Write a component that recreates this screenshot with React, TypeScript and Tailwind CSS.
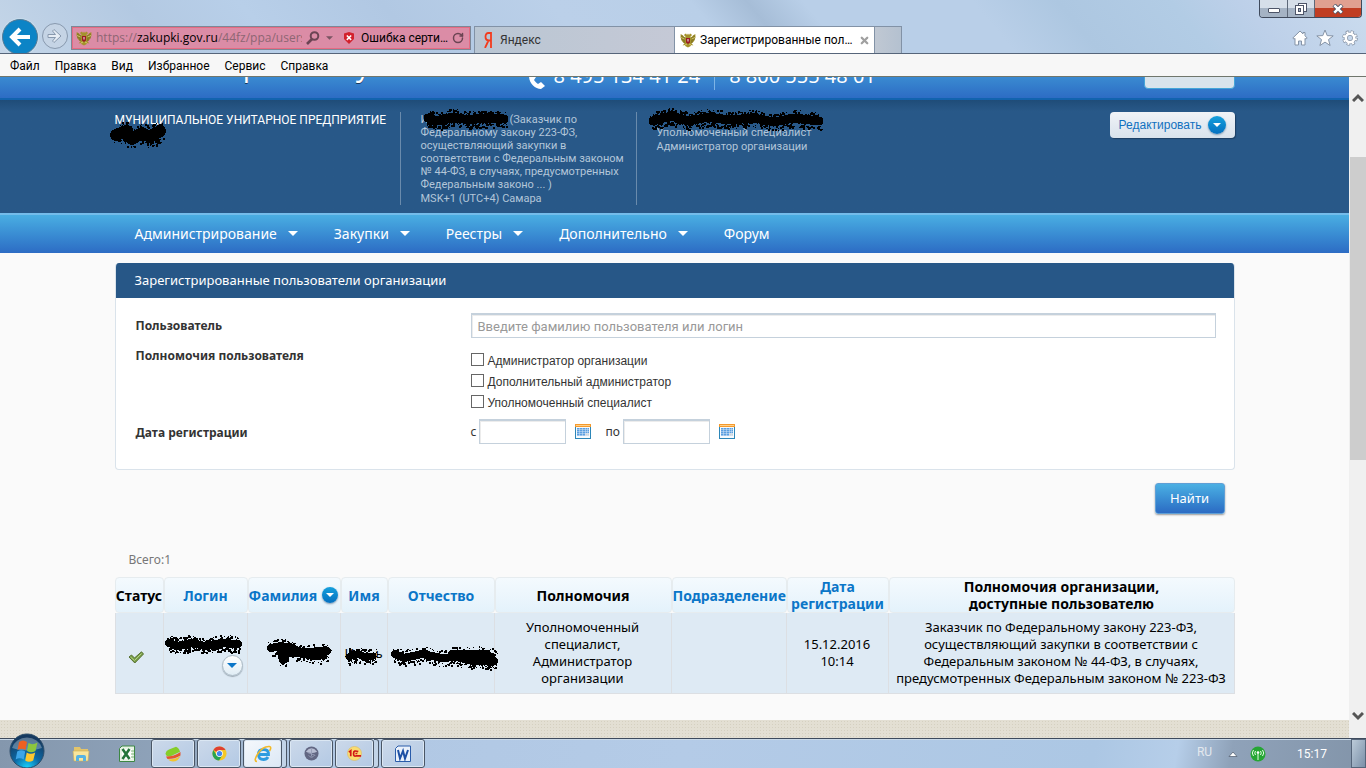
import { useState } from 'react'
import { RotateCw, X } from 'lucide-react'

type Point = [number, number]

const menuItems = ['Файл', 'Правка', 'Вид', 'Избранное', 'Сервис', 'Справка']

const navItems = [
  { title: 'Администрирование', sub: true },
  { title: 'Закупки', sub: true },
  { title: 'Реестры', sub: true },
  { title: 'Дополнительно', sub: true },
  { title: 'Форум', sub: false },
]

const roles = ['Администратор организации', 'Дополнительный администратор', 'Уполномоченный специалист']

// Hand-painted marker stroke that covers personal data
function Scribble({ width, height, points, stroke = 10, className }: {
  width: number
  height: number
  points: Point[]
  stroke?: number
  className: string
}) {
  let seed = width * 31 + height
  const random = () => {
    seed = (seed * 16807) % 2147483647
    return seed / 2147483647
  }
  const specks = Array.from({ length: width * 5 }, () => {
    const at = random() * (points.length - 1)
    const i = Math.min(Math.floor(at), points.length - 2)
    const t = at - i
    const x = points[i][0] + (points[i + 1][0] - points[i][0]) * t
    const y = points[i][1] + (points[i + 1][1] - points[i][1]) * t
    return [
      Math.round(x + (random() - 0.5) * 8),
      Math.round(y + (random() - 0.5) * (stroke + 8)),
      1 + Math.round(random()),
    ]
  })

  return (
    <svg
      width={width}
      height={height}
      className={`pointer-events-none absolute z-10 overflow-visible ${className}`}
      shapeRendering="crispEdges"
      aria-hidden="true"
    >
      <polyline
        points={points.map((p) => p.join(',')).join(' ')}
        fill="none"
        stroke="#000"
        strokeWidth={stroke}
        strokeLinecap="round"
        strokeLinejoin="round"
      />
      {specks.map(([x, y, size], i) => (
        <rect key={i} x={x} y={y} width={size} height={size} fill="#000" />
      ))}
    </svg>
  )
}

function Emblem() {
  return (
    <svg viewBox="0 0 16 16" className="size-4 shrink-0" aria-hidden="true">
      <path
        d="M8 1.500 9 3l1-1.500 1.500.7.3 1.300-1.300 1 .3 1.200L13 3.500l2.300-1.600.2 3.600-.9 2.200-1.200 2.200-1.900 1.300 1.900 2.300-2-.4-1 1.200L8 15.500l-2.400-1.200-1-1.200-2 .4 1.900-2.300-1.900-1.300L1.400 7.700.5 5.500l.2-3.600L3 3.500l2.200 2.200.3-1.200-1.300-1 .3-1.300L6 1.500 7 3z"
        fill="#a5932c"
      />
      <path d="M2 3.500v5M4 5v6M12 5v6M14 3.500v5" stroke="#5d5417" strokeWidth=".7" />
      <path d="M1 5.500 4.500 7M15 5.500 11.500 7M5 13l2-1M11 13l-2-1" stroke="#ded37c" strokeWidth=".8" />
      <path d="M6 6h4v4.500L8 12l-2-1.500z" fill="#9b1b24" />
      <path d="M7.500 7h1v2.500h-1z" fill="#eee" />
    </svg>
  )
}

function ArrowDown({ className = '' }: { className?: string }) {
  return (
    <svg viewBox="0 0 10 5" className={`h-[5px] w-[10px] ${className}`} aria-hidden="true">
      <path d="M0 0h10L5 5z" fill="currentColor" />
    </svg>
  )
}

function RoundArrow({ size }: { size: string }) {
  return (
    <span className={`flex ${size} shrink-0 items-center justify-center rounded-full bg-linear-to-b from-[#16a0dc] to-[#0670c0] text-white shadow-[0_1px_2px_#7d98b0]`}>
      <svg viewBox="0 0 8 4" className="h-1 w-2" aria-hidden="true">
        <path d="M0 0h8L4 4z" fill="currentColor" />
      </svg>
    </span>
  )
}

function CalendarIcon() {
  return (
    <svg viewBox="0 0 16 15" className="h-[15px] w-4" shapeRendering="crispEdges" aria-hidden="true">
      <path d="M0 0h16v15H0z" fill="#2c86b8" />
      <path d="M1 3h14v11H1z" fill="#f6fafd" />
      <path d="M0 0h16v3H0z" fill="#f59a2d" />
      <path d="M1 1h14v1H1z" fill="#ffd18a" />
      <path d="M2 4h12v5H2zM2 9h8v3H2z" fill="#5b9fe0" />
      <path d="M10 9h4v3h-4z" fill="#cfd3d8" />
      <path d="M2 5.500h12M2 7.500h12M2 9.500h12M2 11.500h12M4.500 4v8M7.500 4v8M10.500 4v8M12.500 4v8" stroke="#d3e6f8" strokeWidth=".5" />
    </svg>
  )
}

function BrowserHeader() {
  return (
    <header className="relative flex h-[54px] items-end overflow-hidden border-b border-[#56657a] bg-[linear-gradient(50deg,#c5d6e8_0%,#b3c9e2_12%,#b8cfe9_20%,#b1c8e3_30%,#bbd0e9_42%,#b9cfe8_52%,#a6bdd7_56%,#b9cfe8_60%,#b9cfe8_72%,#adc7e1_78%,#b2cce5_86%,#bdd0e9_91%,#cbdcee_100%)]">
      <div className="flex shrink-0 items-center self-end pl-[2px]">
        <button aria-label="Назад" className="-mb-[2px] size-9 rounded-full border border-[#567b96] bg-[#0c84c6] ring-1 ring-[#c8dcec]">
          <svg viewBox="0 0 34 34" aria-hidden="true">
            <path d="M27 17H10M17 9l-8 8 8 8" fill="none" stroke="#fff" strokeWidth="4" />
          </svg>
        </button>
        <button aria-label="Вперёд" className="ml-1 size-[26px] rounded-full border border-[#8899ae] bg-[#c5d4e5]">
          <svg viewBox="0 0 24 24" aria-hidden="true">
            <path d="M5 10.500h7.500L9.500 7l1.500-1.500L18 12l-7 6.500L9.500 17l3-3.500H5z" fill="#e6edf5" stroke="#8899ae" />
          </svg>
        </button>
      </div>
      <div className="mb-[3px] ml-[3px] flex h-6 w-[400px] shrink-0 items-center border border-[#7e8796] bg-[#db8ca6] font-['Open_Sans','Noto_Sans',sans-serif] text-[12px] leading-[18px] text-black shadow-[inset_0_0_0_1px_#e56b83]">
        <span className="ml-1"><Emblem /></span>
        <div role="textbox" aria-label="Адрес" className="ml-1 w-[206px] overflow-hidden whitespace-nowrap text-[#8d6673]">
          https://<span className="text-black">zakupki.gov.ru</span>/44fz/ppa/users.html
        </div>
        <button aria-label="Поиск" className="ml-1">
          <svg viewBox="0 0 14 14" className="size-[14px]" aria-hidden="true">
            <circle cx="8.500" cy="5" r="3.800" fill="none" stroke="#6b4453" strokeWidth="2" />
            <path d="M6 8 1 13" stroke="#6b4453" strokeWidth="2.600" />
          </svg>
        </button>
        <button aria-label="Список адресов" className="ml-[6px] text-[#7a5462]">
          <svg viewBox="0 0 8 4" className="h-1 w-[7px]" aria-hidden="true"><path d="M0 0h8L4 4z" fill="currentColor" /></svg>
        </button>
        <svg viewBox="0 0 12 12" className="ml-[10px] size-3 shrink-0" aria-hidden="true">
          <path d="M6 0 11 1.500v5.500L6 12 1 7V1.500z" fill="#d3202c" />
          <path d="m3.800 3.500 4.400 4.400M8.200 3.500 3.800 7.900" stroke="#fff" strokeWidth="1.500" />
        </svg>
        <button className="ml-[6px] w-[91px] truncate text-left font-[Roboto,'Noto_Sans',sans-serif] text-[12px]">Ошибка сертификата</button>
        <button aria-label="Обновить"><RotateCw className="size-3 text-[#6b4453]" strokeWidth={3} /></button>
      </div>
      <div role="tablist" className="ml-[3px] flex h-[27px] shrink-0 border-x border-t border-[#8292a6] font-[Roboto,'Noto_Sans',sans-serif] text-[12px] leading-4">
        <button role="tab" className="flex w-[200px] items-center gap-2 border-r border-[#8292a6] bg-linear-to-r from-[#b9c6d3] to-[#c5c9d6] pl-[9px] text-[#333]">
          <svg viewBox="0 0 8 16" className="h-4 w-2" aria-hidden="true">
            <path d="M7 0v16M7 1H4.500C2.500 1 1.500 2.500 1.500 4.700S2.700 8.500 5 8.500h2M4.500 8.500 1 16" fill="none" stroke="#f33b1d" strokeWidth="1.800" />
          </svg>
          Яндекс
        </button>
        <div role="tab" aria-selected="true" className="flex w-[199px] items-center bg-white pl-[5px] text-black">
          <Emblem />
          <span className="ml-1 w-[156px] truncate">Зарегистрированные пользователи</span>
          <button aria-label="Закрыть вкладку" className="ml-[3px]"><X className="size-[11px] text-[#a0a0a0]" strokeWidth={5} /></button>
        </div>
        <button aria-label="Новая вкладка" className="w-[27px] border-l border-[#8292a6] bg-linear-to-r from-[#c0c8d3] to-[#b4c1d0]" />
      </div>
      <div className="mb-[6px] ml-auto flex items-center gap-2 pr-2">
        <button aria-label="Домашняя страница">
          <svg viewBox="0 0 16 16" className="size-4" aria-hidden="true">
            <path d="M8 1 .8 8l1.200 1.200 1-.8V15h3.500v-4h3v4H13V8.400l1 .8L15.200 8 13 5.800V2.500h-2v1.400z" fill="#fff" stroke="#8593a6" />
          </svg>
        </button>
        <button aria-label="Избранное">
          <svg viewBox="0 0 18 18" className="size-[18px]" aria-hidden="true">
            <path d="m9 1 2.200 5.600 6 .3-4.700 3.700L14.100 16.500 9 13.100l-5.100 3.400 1.600-5.900L.8 6.900l6-.3z" fill="#fff" stroke="#8593a6" />
          </svg>
        </button>
        <button aria-label="Параметры">
          <svg viewBox="0 0 16 16" className="size-4" aria-hidden="true">
            <circle cx="8" cy="8" r="6.200" fill="none" stroke="#8593a6" strokeWidth="3.200" strokeDasharray="2.900 1.970" />
            <circle cx="8" cy="8" r="4.200" fill="none" stroke="#8593a6" strokeWidth="4" />
            <circle cx="8" cy="8" r="6" fill="none" stroke="#fff" strokeWidth="2.200" strokeDasharray="1.800 2.912" strokeDashoffset="-.5" />
            <circle cx="8" cy="8" r="4.200" fill="none" stroke="#fff" strokeWidth="2.600" />
          </svg>
        </button>
      </div>
      <div className="absolute top-0 right-1 flex h-[18px] overflow-hidden rounded-b-[4px] border border-t-0 border-[#3f4a5c]">
        <button aria-label="Свернуть" className="flex w-7 items-end justify-center border-r border-[#5d6878] bg-linear-to-b from-[#d6dfe9] from-50% to-[#a5b3c4] to-50% pb-1">
          <span className="h-[5px] w-3 rounded-[1px] border border-[#4d5568] bg-white" />
        </button>
        <button aria-label="Восстановить" className="flex w-[27px] items-center justify-center border-r border-[#5d6878] bg-linear-to-b from-[#d6dfe9] from-50% to-[#a5b3c4] to-50%">
          <svg viewBox="0 0 12 12" className="size-3" shapeRendering="crispEdges" aria-hidden="true">
            <path d="M3.500.5h8v8h-8z" fill="#fff" stroke="#4d5568" />
            <path d="M.5 2.500h8v9h-8z" fill="#fff" stroke="#4d5568" />
            <path d="M3.500 5.500h2v3h-2z" fill="#a5b3c4" stroke="#4d5568" />
          </svg>
        </button>
        <button aria-label="Закрыть" className="flex w-[46px] items-center justify-center bg-linear-to-b from-[#e0a090] from-45% to-[#c03d22] to-50%">
          <svg viewBox="0 0 12 10" className="h-[10px] w-3" aria-hidden="true">
            <path d="m2 1 8 8M10 1 2 9" stroke="#4d5568" strokeWidth="4.200" />
            <path d="m2.300 1.300 7.400 7.400M9.700 1.300 2.300 8.700" stroke="#fff" strokeWidth="2.400" />
          </svg>
        </button>
      </div>
    </header>
  )
}

function OrgHeader() {
  return (
    <>
      <div className="h-[23px] overflow-hidden border-b-2 border-[#1263ae] bg-linear-to-b from-[#3a8ad1] to-[#2d6cc4]">
        <div className="relative mx-auto flex h-full max-w-[1120px] items-end text-white">
          <svg viewBox="0 0 80 6" className="absolute top-0 left-0 h-[6px] w-20" aria-hidden="true">
            <defs>
              <radialGradient id="logo-shadow" cx=".5" cy="0" r=".5">
                <stop offset="0" stopColor="#1a4b85" />
                <stop offset="1" stopColor="#1a4b85" stopOpacity="0" />
              </radialGradient>
            </defs>
            <ellipse cx="40" cy="0" rx="40" ry="6" fill="url(#logo-shadow)" />
          </svg>
          <span className="mb-[19px] ml-[91px] w-[218px] text-[28px] leading-7 whitespace-nowrap [text-shadow:0_1px_0_#17375e]">Портал закупок</span>
          <div className="mb-[8px] ml-[104px] flex items-end text-[20px] leading-7">
            <svg viewBox="0 0 18 18" className="mr-2 size-[18px]" aria-hidden="true">
              <path d="M4 1 1 4c0 7 6 13 12 13l4-3-4-4-3 2c-2-1-3-3-4-4l2-3z" fill="#fff" />
            </svg>
            <span>8 495 134 41 24</span>
            <span className="mx-[14px] h-5 w-px self-end bg-[#7db4e6]" />
            <span>8 800 555 48 01</span>
          </div>
          <button aria-label="Выход" className="mb-[9px] ml-auto h-7 w-[91px] shrink-0 rounded-[4px] border border-[#45a5d8] bg-[#d9e4ec]" />
        </div>
      </div>
      <div className="bg-linear-to-b from-[#1f4c78] to-[#285888] to-10% pt-3 pb-2">
        <div className="mx-auto flex max-w-[1120px] items-stretch font-[Roboto,'Noto_Sans',sans-serif] text-[11px] leading-[13px] text-[#b3c6d9]">
          <div className="relative w-[285px] text-[12px] leading-4 text-white">
            МУНИЦИПАЛЬНОЕ УНИТАРНОЕ ПРЕДПРИЯТИЕ
            <Scribble width={52} height={22} stroke={12} points={[[4, 12], [14, 8], [20, 16], [30, 10], [38, 14], [48, 8], [40, 12]]} className="top-[11px] left-[-3px]" />
          </div>
          <div className="relative w-[237px] border-x border-[#6a8bac] pt-px pl-5">
            <div className="w-[204px]">
              <span className="inline-block w-[89px]">И</span>(Заказчик по Федеральному закону 223-ФЗ, осуществляющий закупки в соответствии с Федеральным законом № 44-ФЗ, в случаях, предусмотренных Федеральным законо ... )
            </div>
            <div className="mt-px">MSK+1 (UTC+4) Самара</div>
            <Scribble width={84} height={14} stroke={9} points={[[4, 6], [14, 9], [30, 5], [44, 8], [60, 6], [80, 7]]} className="top-0 left-[23px]" />
          </div>
          <div className="relative pl-5">
            <div className="h-[14px]" />
            <div className="leading-[14px]">Уполномоченный специалист<br />Администратор организации</div>
            <Scribble width={176} height={16} stroke={9} points={[[-4, 9], [14, 4], [32, 9], [52, 5], [72, 8], [97, 6], [117, 10], [137, 6], [162, 9]]} className="top-0 left-5" />
          </div>
          <button className="ml-auto flex h-[26px] items-center gap-[6px] rounded-[4px] bg-linear-to-b from-[#f0f3f7] to-[#d8e2ec] px-[9px] font-['Liberation_Sans',sans-serif] text-[12px] text-[#1171c0] shadow-[1px_1px_1px_#1c3f63]">
            Редактировать
            <RoundArrow size="size-[18px]" />
          </button>
        </div>
      </div>
      <nav className="border-t-2 border-[#74bcea] bg-linear-to-b from-[#4aaee2] to-[#2d6cc4]">
        <ul className="mx-auto flex h-[38px] max-w-[1120px] items-center gap-9 pb-px pl-5 text-[14px] text-white">
          {navItems.map((item) => (
            <li key={item.title}>
              <a href="#" className="flex items-center gap-[11px]">
                {item.title}
                {item.sub && <ArrowDown />}
              </a>
            </li>
          ))}
        </ul>
      </nav>
    </>
  )
}

function SearchForm() {
  const [user, setUser] = useState('')
  const [from, setFrom] = useState('')
  const [to, setTo] = useState('')
  const [checked, setChecked] = useState<string[]>([])

  const toggle = (role: string) => {
    setChecked(checked.includes(role) ? checked.filter((item) => item !== role) : [...checked, role])
  }

  const field = 'h-[25px] border border-t-2 border-[#c5d1dc] bg-white shadow-[inset_1px_1px_0_#ececec] outline-none'

  return (
    <form onSubmit={(e) => e.preventDefault()}>
      <section className="overflow-hidden rounded-[4px] border border-t-0 border-[#dae3eb] bg-white text-[#333]">
        <h1 className="-mx-px bg-[#275787] px-5 text-[13px] leading-[35px] text-white">
          Зарегистрированные пользователи организации
        </h1>
        <div className="grid grid-cols-[335px_1fr] gap-y-[14px] pt-[15px] pr-[18px] pb-[25px] pl-5 text-[12px] leading-4">
          <label htmlFor="user" className="pt-[5px] font-bold">Пользователь</label>
          <input
            id="user"
            value={user}
            onChange={(e) => setUser(e.target.value)}
            placeholder="Введите фамилию пользователя или логин"
            className={`${field} w-full px-[6px] font-[Roboto,'Noto_Sans',sans-serif] text-[13px] placeholder:text-[#999]`}
          />
          <span className="-mt-[4px] font-bold">Полномочия пользователя</span>
          <div className="flex flex-col gap-[5px] pt-px font-['Liberation_Sans',sans-serif]">
            {roles.map((role) => (
              <label key={role} className="flex items-end gap-1">
                <input
                  type="checkbox"
                  checked={checked.includes(role)}
                  onChange={() => toggle(role)}
                  className="size-[13px] self-start appearance-none border border-[#666] bg-white checked:bg-[#666]"
                />
                <span className="leading-4">{role}</span>
              </label>
            ))}
          </div>
          <span className="font-bold">Дата регистрации</span>
          <div className="-mt-[6px] flex items-center">
            <label htmlFor="from" className="mr-[3px]">с</label>
            <input id="from" value={from} onChange={(e) => setFrom(e.target.value)} className={`${field} w-[87px] px-1`} />
            <button type="button" aria-label="Выбрать дату начала" className="ml-[9px]"><CalendarIcon /></button>
            <label htmlFor="to" className="mr-[3px] ml-[14px]">по</label>
            <input id="to" value={to} onChange={(e) => setTo(e.target.value)} className={`${field} w-[87px] px-1`} />
            <button type="button" aria-label="Выбрать дату окончания" className="ml-[9px]"><CalendarIcon /></button>
          </div>
        </div>
      </section>
      <div className="mt-[13px] flex justify-end pr-[10px]">
        <button className="h-[31px] w-[70px] rounded-[3px] border border-[#5f9fd6] bg-linear-to-b from-[#4bb0e3] to-[#2c6bc3] text-[13px] text-white shadow-[0_1px_2px_#999]">
          Найти
        </button>
      </div>
    </form>
  )
}

function UsersTable() {
  const th = 'h-[36px] rounded-[4px] border border-[#e6ecef] bg-linear-to-b from-[#f4fafe] to-[#e4f2fb] p-0 align-middle text-[14px] whitespace-nowrap'
  const td = 'relative h-[81px] border-r border-b border-[#dcdfe3] bg-[#deeaf4] p-0 text-center align-middle text-[13px]'

  return (
    <table className="w-full table-fixed border-separate border-spacing-0 leading-[17px] text-black">
      <colgroup>
        <col className="w-[49px]" />
        <col className="w-[84px]" />
        <col className="w-[93px]" />
        <col className="w-[47px]" />
        <col className="w-[107px]" />
        <col className="w-[177px]" />
        <col className="w-[115px]" />
        <col className="w-[102px]" />
        <col />
      </colgroup>
      <thead>
        <tr>
          <th className={th}>Статус</th>
          <th className={th}><a href="#" className="text-[#0b76c8]">Логин</a></th>
          <th className={th}>
            <a href="#" className="flex items-center justify-between pr-[2px] text-[#0b76c8]">
              Фамилия
              <RoundArrow size="size-4" />
            </a>
          </th>
          <th className={th}><a href="#" className="text-[#0b76c8]">Имя</a></th>
          <th className={th}><a href="#" className="text-[#0b76c8]">Отчество</a></th>
          <th className={th}>Полномочия</th>
          <th className={th}><a href="#" className="text-[#0b76c8]">Подразделение</a></th>
          <th className={th}><a href="#" className="text-[#0b76c8]">Дата<br />регистрации</a></th>
          <th className={th}>Полномочия организации,<br />доступные пользователю</th>
        </tr>
      </thead>
      <tbody>
        <tr>
          <td className={`${td} border-l`}>
            <svg viewBox="0 0 16 13" className="mt-2 ml-3 h-[13px] w-4" aria-label="Активен">
              <path d="m1 6 2.500-2 3 3L13.500.8 15.500 3 6.800 12z" fill="#7a9f48" stroke="#55702f" />
              <path d="m2.500 6 4 3.500L13.500 2.500" fill="none" stroke="#b3cf8a" />
            </svg>
          </td>
          <td className={td}>
            <Scribble width={78} height={16} stroke={8} points={[[4, 6], [12, 9], [26, 6], [40, 9], [56, 6], [73, 7]]} className="top-[24px] left-[1px]" />
            <button aria-label="Действия" className="mt-[25px] mr-[4px] ml-auto flex size-[21px] items-center justify-center rounded-full border border-[#aab9c4] bg-linear-to-b from-white to-[#e0edf5] text-[#0b76c8] shadow-[0_1px_1px_#9caab5]">
              <ArrowDown />
            </button>
          </td>
          <td className={td}>
            <Scribble width={64} height={28} stroke={8} points={[[4, 8], [14, 6], [24, 8], [34, 12], [60, 11], [52, 16], [30, 13], [14, 12], [16, 20]]} className="top-[27px] left-[19px]" />
          </td>
          <td className={td}>
            <div className="flex justify-between px-[4px]"><span>И</span><span>ь</span></div>
            <Scribble width={34} height={14} stroke={7} points={[[4, 10], [10, 7], [18, 9], [28, 9]]} className="top-[34px] left-[4px]" />
          </td>
          <td className={td}>
            <Scribble width={106} height={18} stroke={8} points={[[3, 6], [12, 10], [30, 6], [50, 10], [64, 9], [80, 13], [102, 13], [94, 6], [60, 6]]} className="top-[35px] left-[4px]" />
          </td>
          <td className={td}>Уполномоченный<br />специалист,<br />Администратор<br />организации</td>
          <td className={td} />
          <td className={td}>15.12.2016<br />10:14</td>
          <td className={`${td} whitespace-nowrap`}>
            Заказчик по Федеральному закону 223-ФЗ,<br />
            осуществляющий закупки в соответствии с<br />
            Федеральным законом № 44-ФЗ, в случаях,<br />
            предусмотренных Федеральным законом № 223-ФЗ
          </td>
        </tr>
      </tbody>
    </table>
  )
}

function Scrollbar() {
  return (
    <div className="flex w-[17px] shrink-0 flex-col items-center bg-[#f0f0f0] pt-4 pb-[17px]" aria-hidden="true">
      <svg viewBox="0 0 12 9" className="h-[9px] w-3"><path d="m1 8 5-5 5 5" fill="none" stroke="#555" strokeWidth="3" /></svg>
      <div className="mt-[55px] h-[303px] w-full border-l border-[#f0f0f0] bg-[#cdcdcd]" />
      <svg viewBox="0 0 12 9" className="mt-auto h-[9px] w-3"><path d="m1 1 5 5 5-5" fill="none" stroke="#555" strokeWidth="3" /></svg>
    </div>
  )
}

function TaskButton({ label, stacked, active, children }: {
  label: string
  stacked?: boolean
  active?: boolean
  children: React.ReactNode
}) {
  return (
    <div className="flex h-full w-11">
      <button
        aria-label={label}
        className={`flex flex-1 items-center justify-center rounded-[3px] border border-[#4a5666] shadow-[inset_0_0_0_1px_#dbe7f3] ${active ? 'bg-linear-to-br from-[#f5f8fc] to-[#dce8f5]' : 'bg-linear-to-br from-[#ccd9ea] to-[#b3c9e4]'}`}
      >
        {children}
      </button>
      {stacked && <span className="w-[5px] rounded-r-[3px] border border-l-0 border-[#4a5666] bg-[#c2d4e8]" />}
    </div>
  )
}

function Taskbar() {
  return (
    <footer className="relative flex h-[30px] shrink-0 items-center border-t border-[#3e4a5c] bg-[linear-gradient(100deg,#8497ad_0%,#8fa3ba_13%,#b0c7e3_22%,#b4cbe7_50%,#acc7e4_80%,#b6cee9_86%,#8fa2b9_90%,#8294a9_100%)] bg-[#b0c7e3] shadow-[inset_0_1px_0_#c9d9e8]">
      <button aria-label="Пуск" className="absolute top-[-6px] left-[9px] h-[35px] overflow-hidden">
        <svg viewBox="0 0 36 36" className="size-9" aria-hidden="true">
          <defs>
            <radialGradient id="orb" cx=".5" cy="1" r=".9">
              <stop offset="0" stopColor="#18d5ff" />
              <stop offset=".45" stopColor="#0c68a4" />
              <stop offset="1" stopColor="#15395f" />
            </radialGradient>
          </defs>
          <circle cx="18" cy="18" r="17" fill="url(#orb)" stroke="#2b4c69" />
          <path d="M3 15a15.500 14 0 0 1 30 0q-15 5-30 0z" fill="#fff" opacity=".3" />
          <path d="M10 9q4-3 8 0l-1.500 8q-4-2.500-8 0z" fill="#ee6022" />
          <path d="M19.500 10q4 2.500 9-.5l-2 8.500q-4.500 2.500-8.500 0z" fill="#8cc63e" />
          <path d="M8.200 18.500q4-2.500 8 0l-1.500 8q-4-2.500-8 0z" fill="#3da5e8" />
          <path d="M17.700 19.500q4 2.500 8.500 0l-2 8q-4.500 2.500-8 0z" fill="#fdc72e" />
        </svg>
      </button>
      <div className="ml-[72px] flex items-center">
        <button aria-label="Проводник">
          <svg viewBox="0 0 18 16" className="h-4 w-[18px]" aria-hidden="true">
            <path d="M2 1h6l1 2h7v11H2z" fill="#e3c46a" />
            <path d="M1 5h16l-1 10H2z" fill="#f8e59c" stroke="#cfae56" strokeWidth=".6" />
            <path d="M4 15v-4q0-2 2-2h6q2 0 2 2v4h-3v-3H7v3z" fill="#55b3e4" />
          </svg>
        </button>
        <button aria-label="Excel" className="ml-7">
          <svg viewBox="0 0 18 18" className="size-[18px]" aria-hidden="true">
            <path d="M4 1h12.500v15.500H1.500V3.500z" fill="#e6f2e4" stroke="#3d8744" />
            <path d="M4 4h10v10H4z" fill="#fff" />
            <path d="m4.500 4 7 10M11.500 4l-7 10" stroke="#24753a" strokeWidth="2.600" />
            <path d="M13 6h3M13 9h3M13 12h3" stroke="#7ab378" />
          </svg>
        </button>
      </div>
      <div className="ml-[15px] flex h-full gap-[2px]">
        <TaskButton label="Файлы">
          <svg viewBox="0 0 16 16" className="size-4" aria-hidden="true">
            <path d="M.5 7.500Q1 4.500 4 3.500L11 .8q3 1 4 5L5 10.500Q1 11 .5 7.500z" fill="#86cd2a" />
            <path d="M1 10.500q8 0 14.500-4.500v3.500Q10 13 2.500 13z" fill="#e4572e" />
            <path d="M3 13.500q7 0 12.500-3.500Q13 15.500 8 15.500q-3 0-5-2z" fill="#f2c42e" />
          </svg>
        </TaskButton>
        <TaskButton label="Chrome">
          <svg viewBox="0 0 16 16" className="size-[15px]" aria-hidden="true">
            <circle cx="8" cy="8" r="7.500" fill="#f6c826" />
            <path d="M8 8 1.500 4.200A7.500 7.500 0 0 1 14.500 4.300H8z" fill="#df4031" />
            <path d="M1.500 4.200A7.500 7.500 0 0 0 7.500 15.500L11 10 5 10z" fill="#29a350" />
            <circle cx="8" cy="8" r="3.600" fill="#fff" />
            <circle cx="8" cy="8" r="2.800" fill="#4386ee" />
          </svg>
        </TaskButton>
        <TaskButton label="Internet Explorer" active stacked>
          <svg viewBox="0 0 18 18" className="size-[18px]" aria-hidden="true">
            <path d="M4.500 9.500h10Q14.500 4.500 9.500 4.500T4.500 9.500t5 5q3 0 4.500-2.500" fill="none" stroke="#2e9bdf" strokeWidth="2.800" />
            <path d="M3 16.500Q-1 16 4 8.500T15.500 1.500Q18 2 15.500 6" fill="none" stroke="#f2b928" strokeWidth="1.600" />
          </svg>
        </TaskButton>
        <TaskButton label="Сеть">
          <svg viewBox="0 0 16 16" className="size-[15px]" aria-hidden="true">
            <circle cx="8" cy="8" r="7.500" fill="#626783" />
            <path d="M2 6q6-7 12 0-6 3-12 0z" fill="#b7bdd2" />
            <path d="M5 10q3 4 6 0M8 3v8M4 7l8 3" stroke="#989fb9" fill="none" />
          </svg>
        </TaskButton>
        <TaskButton label="1С" stacked>
          <svg viewBox="0 0 16 16" className="size-[15px]" aria-hidden="true">
            <circle cx="8" cy="8" r="7.500" fill="#f9dc71" stroke="#d9b760" strokeWidth=".6" />
            <path d="M2 6.500 4 5v6M12 6q-5-2-5 2t3 2.500h5M11 8h-2" fill="none" stroke="#d11616" strokeWidth="1.800" />
          </svg>
        </TaskButton>
        <TaskButton label="Word">
          <svg viewBox="0 0 18 18" className="size-[18px]" aria-hidden="true">
            <path d="M4 1h12.500v15.500H1.500V3.500z" fill="#eaf1fb" stroke="#2a5caa" />
            <path d="m4 5 2 8.500L9 6l2 7.500L14 5" fill="none" stroke="#1c4fa5" strokeWidth="2" />
          </svg>
        </TaskButton>
      </div>
      <div className="ml-auto flex h-full items-center font-[Roboto,'Noto_Sans',sans-serif] text-[12px] text-white">
        <span className="mb-1 text-[#e3e8ee]">RU</span>
        <button aria-label="Скрытые значки" className="ml-4">
          <svg viewBox="0 0 10 6" className="h-[6px] w-[10px]" aria-hidden="true"><path d="m1 5.500 4-4.500 4 4.500z" fill="#fff" stroke="#4b586a" strokeWidth=".7" /></svg>
        </button>
        <svg viewBox="0 0 16 16" className="ml-3 size-4" aria-hidden="true">
          <circle cx="8" cy="8" r="7.500" fill="#26a634" />
          <path d="M8 7v7M5.500 5q-1.500 2 0 4M10.500 5q1.500 2 0 4M3.500 4q-2.500 3 0 6M12.500 4q2.500 3 0 6" stroke="#e4ffe4" fill="none" />
          <circle cx="8" cy="6.500" r="1.300" fill="#fff" />
        </svg>
        <time className="ml-[31px]">15:17</time>
        <button aria-label="Свернуть все окна" className="ml-6 h-full w-[15px] border border-[#55657a] bg-linear-to-br from-[#bccbd9] to-[#7b90a8]" />
      </div>
    </footer>
  )
}

export default function App() {
  return (
    <div className="flex min-h-screen flex-col bg-[#fafafa] font-['Noto_Sans','Open_Sans',sans-serif]">
      <BrowserHeader />
      <div className="flex h-[23px] shrink-0 items-center gap-[15px] border-b border-[#70766c] bg-[#f7f7f7] pt-px pl-[10px] font-[Roboto,'Noto_Sans',sans-serif] text-[12px] leading-4 text-black">
        {menuItems.map((item) => (
          <button key={item}>{item}</button>
        ))}
      </div>
      <div className="flex flex-1">
        <div className="flex min-w-0 flex-1 flex-col">
          <OrgHeader />
          <main className="mx-auto w-full max-w-[1120px] pt-[10px] pb-[26px]">
            <SearchForm />
            <p className="mt-[38px] mb-[9px] pl-[14px] text-[12px] leading-4 text-[#777]">Всего:1</p>
            <UsersTable />
          </main>
          <div className="min-h-[18px] flex-1 bg-[#e3dfd3] bg-[radial-gradient(#d5d0c0_25%,transparent_26%)] bg-[size:3px_3px]" />
        </div>
        <Scrollbar />
      </div>
      <Taskbar />
    </div>
  )
}
